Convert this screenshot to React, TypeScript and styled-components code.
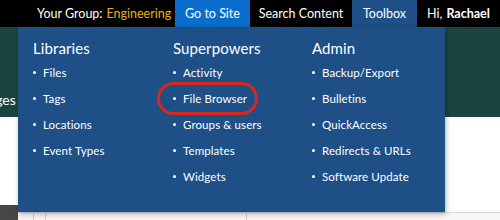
import React from "react";
import styled, { createGlobalStyle } from "styled-components";

const GlobalStyle = createGlobalStyle`
  html, body { margin: 0; padding: 0; }
  body {
    width: 500px;
    height: 220px;
    overflow: hidden;
    background: #ffffff;
    font-family: Lato, "Open Sans", sans-serif;
  }
`;

const Page = styled.div`
  position: relative;
  width: 500px;
  height: 220px;
  overflow: hidden;
`;

const TopBar = styled.div`
  display: flex;
  height: 27px;
  background: #000;
  color: #fff;
  font-size: 12.5px;
`;

const TopItem = styled.div<{ $bg?: string; $width: number }>`
  display: flex;
  align-items: center;
  justify-content: center;
  width: ${(p) => p.$width}px;
  background: ${(p) => p.$bg || "transparent"};
  white-space: nowrap;
`;

const Group = styled.div`
  display: flex;
  align-items: center;
  padding-left: 37px;
  width: 138px;
  white-space: nowrap;
`;

const Gold = styled.span`
  color: #e8b21e;
  margin-left: 4px;
`;

const Strong = styled.b`
  margin-left: 4px;
  font-weight: 700;
`;

const Band = styled.div`
  height: 90px;
  background: #1b4441;
  display: flex;
  align-items: flex-end;
  padding-bottom: 8px;
  box-sizing: border-box;
`;

const BandLink = styled.span`
  color: #fff;
  font-size: 14px;
  margin-left: -20px;
  margin-bottom: 1px;
`;

const Content = styled.div`
  display: flex;
  height: 103px;
`;

const SideDark = styled.div`
  width: 18px;
  margin-top: 88px;
  background: #464646;
`;

const Table = styled.div`
  flex: 1;
  display: flex;
  margin-top: 95px;
  border-top: 1px solid #d8d8d8;
  background: #f6f6f6;
`;

const Cell = styled.div<{ $w: number }>`
  width: ${(p) => p.$w}px;
  border-right: 1px solid #cfcfcf;
`;

const Menu = styled.div`
  position: absolute;
  left: 18px;
  top: 27px;
  width: 427px;
  height: 185px;
  background: #1e4f86;
  box-shadow: 1px 2px 5px rgba(0, 0, 0, 0.3);
  display: grid;
  grid-template-columns: 140px 139px 1fr;
  padding: 12px 0 0 15px;
  box-sizing: border-box;
  color: #fff;
`;

const Column = styled.div`
  display: flex;
  flex-direction: column;
`;

const Heading = styled.div`
  font-size: 15px;
  line-height: 18px;
  margin-bottom: 3px;
  letter-spacing: 0.1px;
`;

const List = styled.ul`
  list-style: none;
  margin: 0;
  padding: 0;
`;

const Item = styled.li`
  position: relative;
  display: flex;
  align-items: center;
  height: 25.8px;
  padding-left: 10px;
  font-size: 11.5px;
  letter-spacing: 0.1px;
  white-space: nowrap;

  &::before {
    content: "";
    position: absolute;
    left: 0;
    top: 50%;
    width: 3px;
    height: 3px;
    margin-top: -1.5px;
    border-radius: 50%;
    background: #fff;
  }
`;

const Highlight = styled.div`
  position: absolute;
  left: -16px;
  top: -4px;
  width: 95px;
  height: 27px;
  border: 3px solid #d6281b;
  border-radius: 17px;
`;

const columns = [
  { title: "Libraries", items: ["Files", "Tags", "Locations", "Event Types"] },
  {
    title: "Superpowers",
    items: ["Activity", "File Browser", "Groups & users", "Templates", "Widgets"],
  },
  {
    title: "Admin",
    items: ["Backup/Export", "Bulletins", "QuickAccess", "Redirects & URLs", "Software Update"],
  },
];

const App: React.FC = () => {
  return (
    <Page>
      <GlobalStyle />
      <TopBar>
        <Group>
          Your Group:<Gold>Engineering</Gold>
        </Group>
        <TopItem $width={75} $bg="#0a6dcb">Go to Site</TopItem>
        <TopItem $width={102}>Search Content</TopItem>
        <TopItem $width={65} $bg="#1e4f86">Toolbox</TopItem>
        <TopItem $width={83}>
          Hi,<Strong>Rachael</Strong>
        </TopItem>
      </TopBar>
      <Band>
        <BandLink>Pages</BandLink>
      </Band>
      <Content>
        <SideDark />
        <Table>
          <Cell $w={15} />
          <Cell $w={11} />
          <Cell $w={200} />
        </Table>
      </Content>
      <Menu>
        {columns.map((col) => (
          <Column key={col.title}>
            <Heading>{col.title}</Heading>
            <List>
              {col.items.map((it) => (
                <Item key={it}>
                  {it}
                  {it === "File Browser" && <Highlight />}
                </Item>
              ))}
            </List>
          </Column>
        ))}
      </Menu>
    </Page>
  );
};

export default App;
